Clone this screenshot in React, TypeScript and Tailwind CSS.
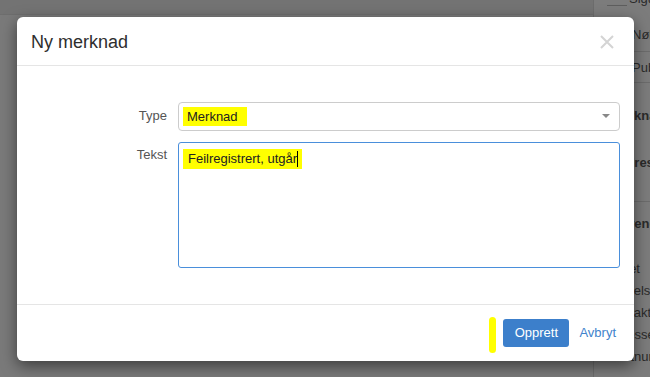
import React from "react";

export default function App() {
  const font = { fontFamily: '"Liberation Sans", Arial, sans-serif' };
  return (
    <div
      className="relative w-[650px] h-[377px] overflow-hidden bg-[#7a7a7a]"
      style={font}
    >
      {/* background page under overlay */}
      <div className="flex h-full">
        <div className="flex-1 flex flex-col">
          <div className="h-[15px] bg-[#737373] border-b border-[#6e6e6e]" />
        </div>
        <div className="w-[57px] h-full border-l border-[#6c6c6c] bg-[#7c7c7c] text-[13px] text-[#2a2a2a] whitespace-nowrap overflow-hidden">
          <div className="relative h-[15px]">
            <div className="absolute left-[13px] top-[5px] w-[20px] border-t border-[#5e5e5e]" />
            <div className="absolute left-[35px] top-[-9px] leading-[15px]">Sigurd</div>
          </div>
          <div className="ml-[13px] pl-[25px] pt-[12px] h-[37px] leading-[16px] border-b border-[#6c6c6c]">Nøkkel</div>
          <div className="ml-[13px] pl-[25px] pt-[8px] h-[31px] leading-[16px] border-b border-[#6c6c6c]">Publisert</div>
          <div className="pl-[17px] pt-[25px] leading-[16px] font-bold">Merknad</div>
          <div className="pl-[23px] pt-[31px] leading-[16px] font-bold">Adresse</div>
          <div className="mt-[30px] border-t border-[#6c6c6c] pl-[7px] pt-[14px] leading-[16px] font-bold">Referencer</div>
          <div className="pl-[12px] pt-[29px] leading-[16px]">Enhet</div>
          <div className="pl-[31px] pt-[6px] leading-[16px]">Selskap</div>
          <div className="pl-[13px] pt-[6px] leading-[16px]">Kontaktperson</div>
          <div className="pl-[13px] pt-[6px] leading-[16px]">Adresse</div>
          <div className="pl-[14px] pt-[6px] leading-[16px]">Postnummer</div>
        </div>
      </div>

      {/* modal */}
      <div className="absolute left-[17px] top-[17px] w-[617px] h-[344px] bg-white rounded-[6px] shadow-[0_5px_15px_rgba(0,0,0,0.5)] flex flex-col">
        <div className="h-[49px] flex items-center justify-between pl-[14px] pr-[20px] border-b border-[#e5e5e5]">
          <div className="text-[18px] text-[#2e2e2e] leading-[22px] pt-[1px]">Ny merknad</div>
          <svg width="14" height="14" viewBox="0 0 14 14" className="mt-[2px]">
            <path d="M1 1 L13 13 M13 1 L1 13" stroke="#d4d4d4" strokeWidth="2" />
          </svg>
        </div>

        <div className="flex-1 pt-[36px] pr-[14px] flex flex-col gap-[11px]">
          <div className="flex">
            <div className="w-[150px] text-right text-[13px] text-[#555] pt-[6px] leading-[16px]">Type</div>
            <div className="ml-[11px] flex-1 h-[29px] border border-[#ccc] rounded-[4px] flex items-center justify-between pl-[4px] pr-[9px]">
              <span className="bg-[#ffff00] text-[13px] text-[#222] leading-[19px] pl-[4px] w-[64px] h-[19px]">Merknad</span>
              <svg width="8" height="5" viewBox="0 0 8 5">
                <path d="M0 0 L8 0 L4 4 Z" fill="#888" />
              </svg>
            </div>
          </div>
          <div className="flex">
            <div className="w-[150px] text-right text-[13px] text-[#555] pt-[5px] leading-[16px]">Tekst</div>
            <div className="ml-[11px] flex-1 h-[126px] border border-[#4a8fdb] rounded-[3px] pl-[4px] pt-[3px]">
              <span className="inline-flex items-center bg-[#ffff00] text-[13px] text-[#222] leading-[20px] h-[20px] pl-[5px] pr-[3px] w-[119px]">
                Feilregistrert, utgår
                <span className="inline-block w-px h-[16px] bg-black" />
              </span>
            </div>
          </div>
        </div>

        <div className="h-[57px] border-t border-[#e5e5e5] flex items-center justify-end pr-[18px]">
          <div className="w-[7px] h-[36px] rounded-full bg-[#ffff00] mr-[7px] mt-[4px]" />
          <button className="h-[28px] w-[66px] flex items-center justify-center rounded-[3px] bg-[#3c7fcb] text-white text-[13px] leading-[16px]">
            Opprett
          </button>
          <span className="ml-[10px] text-[13px] text-[#3f83cc] leading-[16px]">Avbryt</span>
        </div>
      </div>
    </div>
  );
}
